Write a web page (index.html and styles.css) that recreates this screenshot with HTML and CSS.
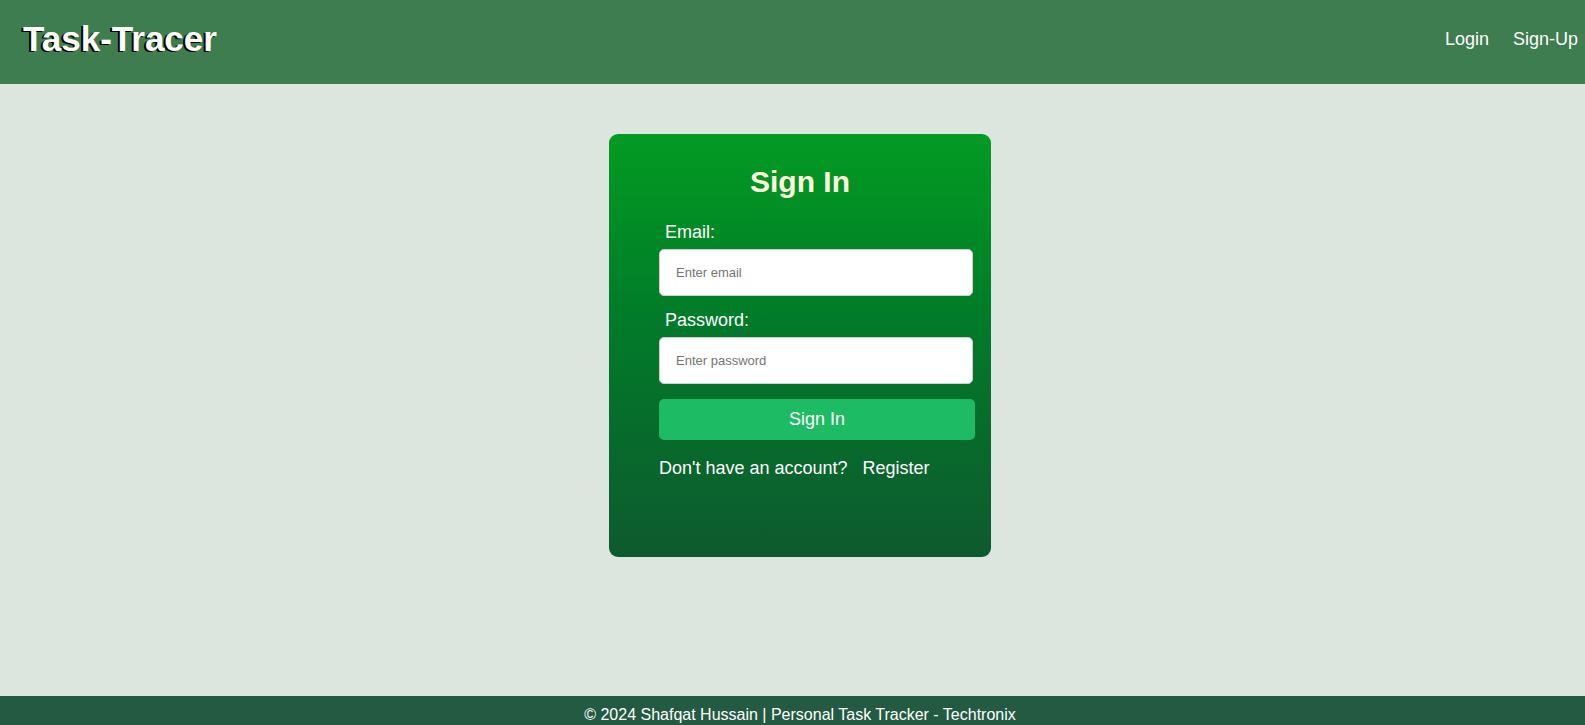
FILE: index.html
```html
<!DOCTYPE html>
<html lang="en">
<head>
<meta charset="utf-8">
<title>Task-Tracer</title>
<link rel="stylesheet" href="styles.css">
</head>
<body>
<div class="page">
  <header class="topbar">
    <div class="logo">Task-Tracer</div>
    <nav class="nav">
      <a href="#" class="nav-link">Login</a>
      <a href="#" class="nav-link">Sign-Up</a>
    </nav>
  </header>
  <main class="main">
    <div class="card">
      <h1 class="card-title">Sign In</h1>
      <form class="form">
        <label class="label" for="email">Email:</label>
        <input class="input" id="email" type="email" placeholder="Enter email">
        <label class="label label-gap" for="password">Password:</label>
        <input class="input" id="password" type="password" placeholder="Enter password">
        <button class="btn" type="button">Sign In</button>
        <p class="alt">Don't have an account? <a href="#" class="alt-link">Register</a></p>
      </form>
    </div>
  </main>
  <footer class="footer">© 2024 Shafqat Hussain | Personal Task Tracker - Techtronix</footer>
</div>
</body>
</html>
```
FILE: styles.css
```css
* { box-sizing: border-box; }
html, body { margin: 0; padding: 0; }
body {
  font-family: "Liberation Sans", Arial, sans-serif;
  background: #dde6de;
  height: 725px;
  overflow: hidden;
}
.page {
  display: flex;
  flex-direction: column;
  height: 725px;
}
.topbar {
  height: 84px;
  background: #3e7d4f;
  display: flex;
  align-items: center;
  justify-content: space-between;
  padding: 0 7px 6px 23px;
}
.logo {
  font-size: 35px;
  line-height: 40px;
  font-weight: bold;
  color: #fffdfa;
  text-shadow: -2px 1px 0 #000;
}
.nav {
  display: flex;
  gap: 24px;
}
.nav-link {
  color: #fff;
  text-decoration: none;
  font-size: 18px;
  line-height: 21px;
}
.main {
  flex: 1;
  display: flex;
  justify-content: center;
  align-items: flex-start;
  padding: 50px 0 0 15px;
}
.card {
  width: 382px;
  height: 423px;
  border-radius: 9px;
  background: linear-gradient(to bottom, #029b22 0%, #017a29 45%, #0e5a2f 100%);
  padding: 30px 16px 0 50px;
}
.card-title {
  margin: 0 0 22px -34px;
  text-align: center;
  font-size: 30px;
  line-height: 36px;
  font-weight: bold;
  color: #fff8dc;
}
.form {
  display: flex;
  flex-direction: column;
  width: 316px;
}
.label {
  font-size: 18px;
  line-height: 21px;
  color: #fff;
  padding-left: 6px;
  margin-bottom: 6px;
}
.label-gap { margin-top: 14px; }
.input {
  width: 314px;
  height: 47px;
  border: 1px solid #d0d0d0;
  border-radius: 5px;
  background: #fff;
  padding: 0 16px;
  font-family: "Liberation Sans", Arial, sans-serif;
  font-size: 13px;
  color: #333;
}
.input::placeholder { color: #757575; }
.btn {
  margin-top: 15px;
  width: 316px;
  height: 41px;
  border: none;
  border-radius: 5px;
  background: #1dbb63;
  color: #fff;
  font-family: "Liberation Sans", Arial, sans-serif;
  font-size: 18px;
}
.alt {
  margin: 18px 0 0;
  font-size: 18px;
  line-height: 21px;
  color: #fff;
}
.alt-link {
  color: #fff;
  text-decoration: none;
  margin-left: 10px;
}
.footer {
  height: 29px;
  background: #245a42;
  color: #fff;
  font-size: 16px;
  line-height: 18px;
  padding: 10px 0 0 15px;
  text-align: center;
}
```
